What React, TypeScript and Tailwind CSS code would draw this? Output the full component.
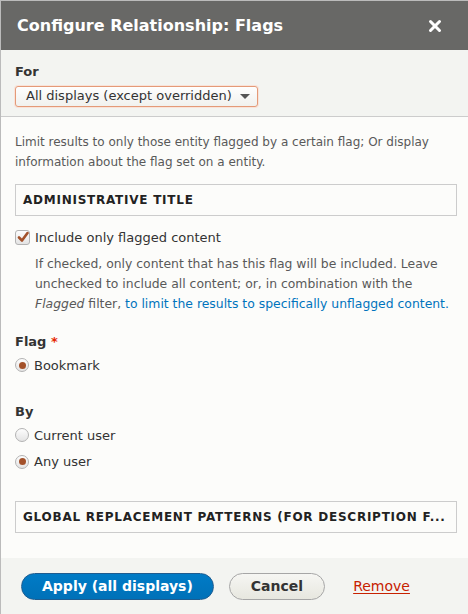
import { X } from "lucide-react";

function Radio({ checked, label }: { checked?: boolean; label: string }) {
  return (
    <label className="flex items-center gap-[5px] text-[13px] text-[#333]">
      <span className="flex h-[14px] w-[14px] items-center justify-center rounded-full border border-[#b3b3b3] bg-gradient-to-b from-[#fdfdfd] to-[#e4e4e4]">
        {checked && <span className="h-[7px] w-[7px] rounded-full bg-[#a3512a]" />}
      </span>
      {label}
    </label>
  );
}

export default function App() {
  return (
    <div
      className="flex h-[614px] w-[468px] flex-col border-l border-t border-[#bbb] bg-[#fcfcfa]"
      style={{ fontFamily: '"DejaVu Sans", sans-serif' }}
    >
      {/* title bar */}
      <div className="flex h-[49px] items-center justify-between bg-[#686866] pl-[16px] pr-[24px]">
        <h1 className="text-[16px] font-bold text-white">Configure Relationship: Flags</h1>
        <X className="h-[18px] w-[18px] text-white" strokeWidth={4} />
      </div>

      {/* override bar */}
      <div className="border-b border-[#ccc] bg-[#f3f4f1] px-[14px] pb-[9px] pt-[12px]">
        <div className="text-[13px] font-bold text-[#333]">For</div>
        <div className="mt-[4px] flex h-[21px] w-[243px] items-center justify-between rounded-[3px] border border-[#e49a78] bg-gradient-to-b from-[#fefefe] to-[#f1f1ee] pl-[10px] pr-[7px] text-[13px] text-[#333] shadow-[0_0_0_1px_#f9e3d9]">
          <span>All displays (except overridden)</span>
          <span className="h-0 w-0 border-x-[5px] border-t-[5px] border-x-transparent border-t-[#555]" />
        </div>
      </div>

      {/* body */}
      <div className="flex-1 px-[14px] pt-[15px]">
        <p className="w-[432px] text-[12px] leading-[20px] text-[#595959]">
          Limit results to only those entity flagged by a certain flag; Or display information about the flag set on
          a entity.
        </p>

        <div className="mt-[12px] flex h-[32px] w-[442px] items-center border border-[#ccc] px-[7px] text-[12px] font-bold tracking-[0.75px] text-[#222]">
          ADMINISTRATIVE TITLE
        </div>

        <div className="mt-[12px]">
          <label className="flex items-center gap-[5px] text-[13px] text-[#333]">
            <span className="flex h-[15px] w-[15px] items-center justify-center rounded-[3px] border border-[#b3b3b3] bg-gradient-to-b from-[#fdfdfd] to-[#e4e4e4]">
              <svg viewBox="0 0 12 12" className="h-[12px] w-[12px]">
                <path d="M2 6.5 L5 9.5 L10.5 2" fill="none" stroke="#a3512a" strokeWidth="2.6" strokeLinecap="round" strokeLinejoin="round" />
              </svg>
            </span>
            Include only flagged content
          </label>
          <p className="ml-[20px] mt-[7px] w-[418px] text-[12.4px] leading-[20px] text-[#595959]">
            If checked, only content that has this flag will be included. Leave unchecked to include all content; or, in
            combination with the <em>Flagged</em> filter,{" "}
            <a className="text-[#0074bd]">to limit the results to specifically unflagged content.</a>
          </p>
        </div>

        <div className="mt-[18px]">
          <div className="text-[13px] font-bold text-[#333]">
            Flag <span className="text-[#e62600]">*</span>
          </div>
          <div className="mt-[4px]">
            <Radio checked label="Bookmark" />
          </div>
        </div>

        <div className="mt-[27px]">
          <div className="text-[13px] font-bold text-[#333]">By</div>
          <div className="mt-[4px] flex flex-col gap-[7px]">
            <Radio label="Current user" />
            <Radio checked label="Any user" />
          </div>
        </div>

        <div className="mt-[29px] flex h-[32px] w-[442px] items-center border border-[#ccc] px-[7px] text-[12px] font-bold tracking-[0.75px] text-[#222]">
          GLOBAL REPLACEMENT PATTERNS (FOR DESCRIPTION F...
        </div>
      </div>

      {/* footer */}
      <div className="flex h-[56px] items-center gap-[15px] bg-[#f3f4f1] pl-[20px]">
        <button className="h-[27px] rounded-full border border-[#1e5c90] bg-gradient-to-b from-[#007bc6] to-[#0071b8] px-[20px] text-[14px] font-bold text-white">
          Apply (all displays)
        </button>
        <button className="h-[27px] rounded-full border border-[#a6a6a6] bg-gradient-to-b from-[#f6f6f3] to-[#e7e7df] px-[21px] text-[14px] font-bold text-[#333]">
          Cancel
        </button>
        <a className="ml-[13px] text-[14px] text-[#c72100] underline underline-offset-2">Remove</a>
      </div>
    </div>
  );
}
